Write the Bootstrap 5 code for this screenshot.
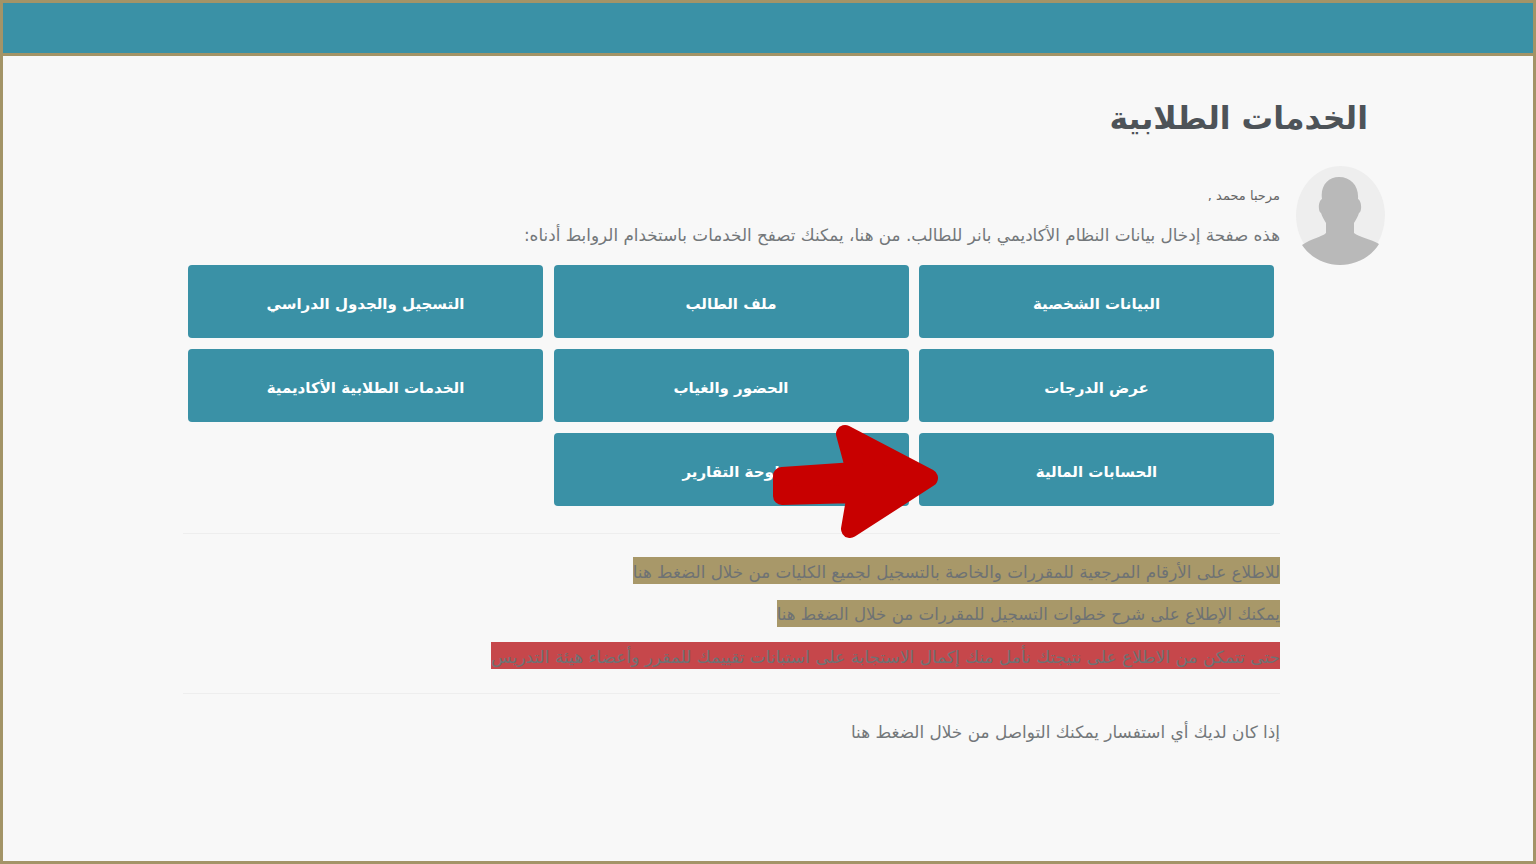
<!DOCTYPE html>
<html lang="ar" dir="rtl">
<head>
    <meta charset="UTF-8">
    <title>الخدمات الطلابية</title>
    <link rel="stylesheet" href="https://cdn.jsdelivr.net/npm/bootstrap@5.3.0/dist/css/bootstrap.min.css">
    <style>
        html, body { height: 100%; }
        body {
            background: #f8f8f8;
            font-family: "DejaVu Sans", "Noto Sans", sans-serif;
            color: #73777a;
            overflow: hidden;
        }
        .page-frame {
            position: relative;
            height: 864px;
            border: 3px solid #a39467;
            background: #f8f8f8;
        }
        .top-strip {
            height: 53px;
            background: #3a91a6;
            border-bottom: 3px solid #a39467;
        }
        .page-title {
            font-size: 31.5px;
            font-weight: 700;
            color: #4d5358;
            margin: 42px 165px 0 0;
            line-height: 40px;
        }
        .content-wrap {
            margin: 28px 148px 0 0;
            gap: 16px;
        }
        .avatar-pic { width: 89px; height: 99px; flex: none; }
        .main-col { width: 1097px; flex: none; }
        .hello-line { font-size: 13px; line-height: 20px; margin: 20px 0 0; color: #666; }
        .intro-line { font-size: 16.8px; line-height: 24px; margin: 17px 0 0; }
        .svc-grid {
            display: grid;
            grid-template-columns: repeat(3, 355px);
            grid-auto-rows: 73px;
            column-gap: 10.5px;
            row-gap: 11px;
            margin: 18px 6px 0 0;
        }
        .svc-btn {
            display: flex;
            align-items: center;
            justify-content: center;
            padding-top: 6px;
            background: #3a91a6;
            border: 0;
            border-radius: 4px;
            color: #fff;
            font-size: 15px;
            font-weight: 700;
        }
        .soft-rule { border-top: 1px solid #eeeeee; opacity: 1; margin: 0; }
        .rule-one { margin-top: 27px; }
        .link-list { margin-top: 23px; display: flex; flex-direction: column; gap: 16px; }
        .link-line { display: flex; font-size: 16.75px; line-height: 27px; margin: 0; color: #6e7274; }
        .link-line.line-short { font-size: 16.65px; }
        .link-line.line-long { font-size: 16.97px; margin-top: -1px; }
        .mark-tan, .mark-red { padding-top: 3px; line-height: 24px; }
        .mark-tan { background: #a89869; }
        .mark-red { background: #c6474b; }
        .rule-two { margin-top: 24px; }
        .ask-line { font-size: 16.9px; line-height: 27px; margin: 25px 0 0; }
        .red-arrow { position: absolute; left: 767px; top: 420px; }
    </style>
</head>
<body>
<div class="page-frame">
    <div class="top-strip"></div>
    <h1 class="page-title">الخدمات الطلابية</h1>
    <div class="d-flex content-wrap">
        <svg class="avatar-pic" viewBox="0 0 89 99">
            <ellipse cx="44.5" cy="49.5" rx="44.5" ry="49.5" fill="#eeeeee"/>
            <path fill="#b9b9b9" d="M6 79 C16 72 26 71 30 67 L30 57 C28 54 26 50 25 47 C22 46 22 35 26 33 C24 20 32 11 43 11 C55 11 63 20 62 33 C66 35 66 46 63 47 C62 50 60 54 58 57 L58 67 C63 71 75 73 83 78 C75 91 60 99 44 99 C28 99 14 91 6 79 Z"/>
        </svg>
        <div class="main-col">
            <p class="hello-line">مرحبا محمد ,</p>
            <p class="intro-line">هذه صفحة إدخال بيانات النظام الأكاديمي بانر للطالب. من هنا، يمكنك تصفح الخدمات باستخدام الروابط أدناه:</p>
            <div class="svc-grid">
                <a class="svc-btn text-decoration-none" href="#">البيانات الشخصية</a>
                <a class="svc-btn text-decoration-none" href="#">ملف الطالب</a>
                <a class="svc-btn text-decoration-none" href="#">التسجيل والجدول الدراسي</a>
                <a class="svc-btn text-decoration-none" href="#">عرض الدرجات</a>
                <a class="svc-btn text-decoration-none" href="#">الحضور والغياب</a>
                <a class="svc-btn text-decoration-none" href="#">الخدمات الطلابية الأكاديمية</a>
                <a class="svc-btn text-decoration-none" href="#">الحسابات المالية</a>
                <a class="svc-btn text-decoration-none" href="#">لوحة التقارير</a>
            </div>
            <hr class="soft-rule rule-one">
            <div class="link-list">
                <p class="link-line"><span class="mark-tan">للاطلاع على الأرقام المرجعية للمقررات والخاصة بالتسجيل لجميع الكليات من خلال الضغط هنا</span></p>
                <p class="link-line line-short"><span class="mark-tan">يمكنك الإطلاع على شرح خطوات التسجيل للمقررات من خلال الضغط هنا</span></p>
                <p class="link-line line-long"><span class="mark-red">حتى تتمكن من الاطلاع على نتيجتك نأمل منك إكمال الاستجابة على استبانات تقييمك للمقرر وأعضاء هيئة التدريس</span></p>
            </div>
            <hr class="soft-rule rule-two">
            <p class="ask-line">إذا كان لديك أي استفسار يمكنك التواصل من خلال الضغط هنا</p>
        </div>
    </div>
    <svg class="red-arrow" width="172" height="120" viewBox="0 0 172 120">
        <path fill="#c80000" stroke="#c80000" stroke-width="18" stroke-linejoin="round" d="M12 53 L85 48 L75 11 L159 55 L80 106 L86 71 L12 73 Z"/>
    </svg>
</div>
<script src="https://cdn.jsdelivr.net/npm/bootstrap@5.3.0/dist/js/bootstrap.bundle.min.js"></script>
</body>
</html>
